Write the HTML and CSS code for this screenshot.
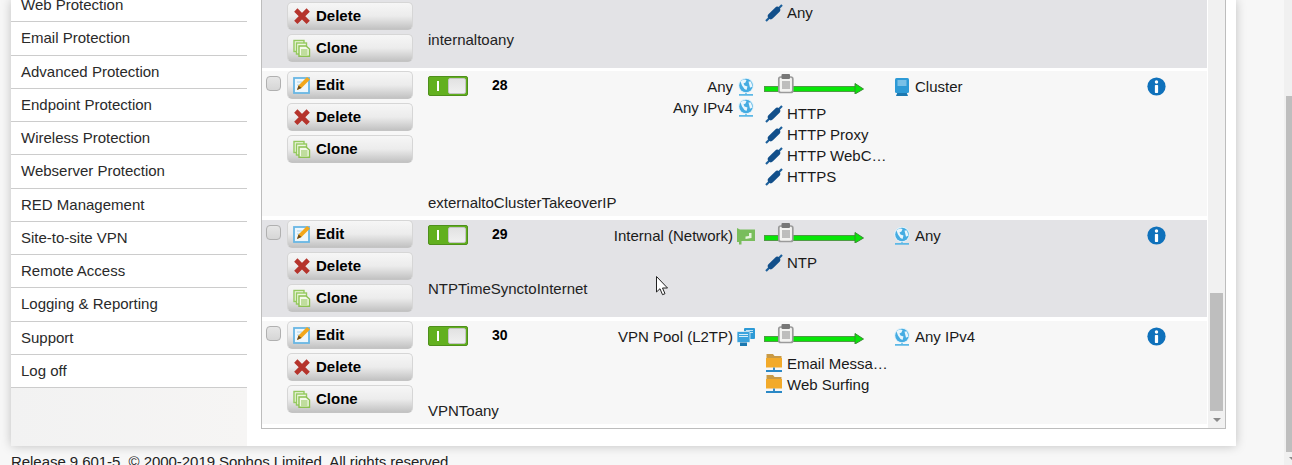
FILE: index.html
```html
<!DOCTYPE html>
<html lang="en">
<head>
<meta charset="utf-8">
<title>Firewall rules</title>
<link rel="stylesheet" href="styles.css">
</head>
<body>
<svg class="defs" width="0" height="0" aria-hidden="true">
  <defs>
    <symbol id="i-edit" viewBox="0 0 18 18"><rect x="1" y="2" width="15" height="15" fill="#eef7fc" stroke="#68b6e4" stroke-width="1.800"/><path d="M4 6h5M4 9h3" stroke="#a9d3ec"/><path d="M4 14l1.500-4.500 8.500-8.500 3 2.500-8.500 8.500z" fill="#f2a71b"/><path d="M4 14l1.500-4.500 3 2.500z" fill="#6b4a1c"/></symbol>
    <symbol id="i-del" viewBox="0 0 18 18"><path d="M2.800 3l12.400 12.400M15.200 3L2.800 15.400" stroke="#b5342c" stroke-width="4.600"/></symbol>
    <symbol id="i-clone" viewBox="0 0 18 18"><rect x="1" y="1.500" width="10" height="11" fill="#eef7e2" stroke="#95c95f" stroke-width="1.400"/><rect x="3.500" y="4" width="10" height="11" fill="#eef7e2" stroke="#95c95f" stroke-width="1.400"/><path d="M6 7h7l3.500 3v7.300H6z" fill="#f4fae9" stroke="#8cc152" stroke-width="1.400"/><path d="M8 11h6.500M8 13h6.500M8 15h6.500" stroke="#8cc152"/></symbol>
    <symbol id="i-plug" viewBox="0 0 18 18"><path d="M1 17L17 1" stroke="#1c5f9b" stroke-width="2.200"/><path d="M5.800 12.200l6.400-6.400" stroke="#124f8a" stroke-width="6" stroke-linecap="round"/></symbol>
    <symbol id="i-globe" viewBox="0 0 18 18"><path d="M9 14v3M2 16.800h14" stroke="#5cb8e6" stroke-width="1.700"/><circle cx="9" cy="7.500" r="7.800" fill="#dff1fa"/><circle cx="9" cy="7.500" r="6.800" fill="#45ace2"/><path d="M3.500 3.500c2-2.200 4.500-2.500 6-1.500l-1 2.500-2 1 1 2 3 1-1 3.500-2-1-2.500-3.500zM11.500 3.500h2.500l1.500 5-2.500 1.200z" fill="#eaf6fc"/></symbol>
    <symbol id="i-host" viewBox="0 0 18 18"><path d="M5 13h8l2 5H3z" fill="#1b78b0"/><rect x="2" y="0" width="14" height="15" rx="1.500" fill="#2d9ad6"/><path d="M4.500 3h9M4.500 5h9M4.500 7h9" stroke="#c6e7f8"/></symbol>
    <symbol id="i-net" viewBox="0 0 18 18"><path d="M0 1l3 1.500h15V14H4.500v3.500H2V15H0z" fill="#79bd5c"/><path d="M8.500 9.500l3.500-.5V6h2.500v5l-6 1z" fill="#e7f3de"/></symbol>
    <symbol id="i-pool" viewBox="0 0 18 18"><rect x="7" y="0" width="11" height="11" rx="1" fill="#2d9ad6"/><path d="M9 2.500h7M9 4.500h7" stroke="#bfe3f6"/><rect x="0" y="3.500" width="13" height="11" rx="1" fill="#3aa3dd" stroke="#f7f7f7" stroke-width=".7"/><path d="M2 6.500h9M2 8.500h9" stroke="#d6eefa"/><path d="M3 14.500h7V18H3z" fill="#1b78b0"/></symbol>
    <symbol id="i-group" viewBox="0 0 18 20"><path d="M1.500 0h6.500l1.500 2h7v11h-15z" fill="#c99a45"/><path d="M1 4h16v9.500H1z" fill="#f2aa2a"/><path d="M9 13.500v3.500" stroke="#2a7fbd" stroke-width="1.800"/><path d="M1 17h16" stroke="#2a88c6" stroke-width="2"/></symbol>
    <symbol id="i-arrow" viewBox="0 0 100 20"><rect x="0.500" y="12.500" width="92" height="5" fill="#07e607" stroke="#4f9a45"/><path d="M91 9.500l8.500 5.500-8.500 5z" fill="#07e607" stroke="#3d8b35"/><rect x="14.800" y="3" width="14" height="15.500" rx="2" fill="#f3f3f1" stroke="#9a9a9a" stroke-width="1.700"/><rect x="17.500" y="0" width="8.500" height="5" rx="1" fill="#777"/><path d="M18 8h8M18 10h8M18 12h8M18 14h8" stroke="#888"/></symbol>
    <symbol id="i-info" viewBox="0 0 20 20"><circle cx="10" cy="10" r="9.600" fill="#0f71bb"/><circle cx="10" cy="5.300" r="1.800" fill="#fff"/><rect x="8.300" y="8.300" width="3.400" height="8.500" rx=".8" fill="#fff"/></symbol>
  </defs>
</svg>

<div class="shell">
  <nav class="side">
    <ul class="menu">
      <li>Web Protection</li>
      <li>Email Protection</li>
      <li>Advanced Protection</li>
      <li>Endpoint Protection</li>
      <li>Wireless Protection</li>
      <li>Webserver Protection</li>
      <li>RED Management</li>
      <li>Site-to-site VPN</li>
      <li>Remote Access</li>
      <li>Logging &amp; Reporting</li>
      <li>Support</li>
      <li>Log off</li>
    </ul>
  </nav>
  <main class="main">
    <div class="box">
      <div class="list">
        <div class="rows">

          <div class="row dark row-27">
            <div class="check-cell"></div>
            <div class="buttons">
              <button class="btn"><svg class="ic"><use href="#i-edit"/></svg>Edit</button>
              <button class="btn"><svg class="ic"><use href="#i-del"/></svg>Delete</button>
              <button class="btn"><svg class="ic"><use href="#i-clone"/></svg>Clone</button>
            </div>
            <div class="body">
              <div class="info-line">
                <div class="toggle-cell"></div>
                <div class="num"></div>
                <div class="src"></div>
                <div class="mid">
                  <div class="arrow-spacer"></div>
                  <div class="svc-list">
                    <div class="svc"><svg class="ic"><use href="#i-plug"/></svg><span>Any</span></div>
                  </div>
                </div>
              </div>
              <div class="name name-27">internaltoany</div>
            </div>
          </div>

          <div class="row light row-28">
            <div class="check-cell"><span class="check"></span></div>
            <div class="buttons">
              <button class="btn"><svg class="ic"><use href="#i-edit"/></svg>Edit</button>
              <button class="btn"><svg class="ic"><use href="#i-del"/></svg>Delete</button>
              <button class="btn"><svg class="ic"><use href="#i-clone"/></svg>Clone</button>
            </div>
            <div class="body">
              <div class="info-line">
                <div class="toggle-cell"><span class="toggle"><span class="bar"></span><span class="knob"></span></span></div>
                <div class="num">28</div>
                <div class="src">
                  <div class="src-item">Any<svg class="ic"><use href="#i-globe"/></svg></div>
                  <div class="src-item">Any IPv4<svg class="ic"><use href="#i-globe"/></svg></div>
                </div>
                <div class="mid">
                  <svg class="arrow"><use href="#i-arrow"/></svg>
                  <div class="svc-list">
                    <div class="svc"><svg class="ic"><use href="#i-plug"/></svg><span>HTTP</span></div>
                    <div class="svc"><svg class="ic"><use href="#i-plug"/></svg><span>HTTP Proxy</span></div>
                    <div class="svc"><svg class="ic"><use href="#i-plug"/></svg><span>HTTP WebC…</span></div>
                    <div class="svc"><svg class="ic"><use href="#i-plug"/></svg><span>HTTPS</span></div>
                  </div>
                </div>
                <div class="dst"><svg class="ic"><use href="#i-host"/></svg>Cluster</div>
                <svg class="info"><use href="#i-info"/></svg>
              </div>
              <div class="name">externaltoClusterTakeoverIP</div>
            </div>
          </div>

          <div class="row dark row-29">
            <div class="check-cell"><span class="check"></span></div>
            <div class="buttons">
              <button class="btn"><svg class="ic"><use href="#i-edit"/></svg>Edit</button>
              <button class="btn"><svg class="ic"><use href="#i-del"/></svg>Delete</button>
              <button class="btn"><svg class="ic"><use href="#i-clone"/></svg>Clone</button>
            </div>
            <div class="body">
              <div class="info-line">
                <div class="toggle-cell"><span class="toggle"><span class="bar"></span><span class="knob"></span></span></div>
                <div class="num">29</div>
                <div class="src">
                  <div class="src-item">Internal (Network)<svg class="ic"><use href="#i-net"/></svg></div>
                </div>
                <div class="mid">
                  <svg class="arrow"><use href="#i-arrow"/></svg>
                  <div class="svc-list">
                    <div class="svc"><svg class="ic"><use href="#i-plug"/></svg><span>NTP</span></div>
                  </div>
                </div>
                <div class="dst"><svg class="ic"><use href="#i-globe"/></svg>Any</div>
                <svg class="info"><use href="#i-info"/></svg>
              </div>
              <div class="name">NTPTimeSynctoInternet</div>
            </div>
          </div>

          <div class="row light row-30">
            <div class="check-cell"><span class="check"></span></div>
            <div class="buttons">
              <button class="btn"><svg class="ic"><use href="#i-edit"/></svg>Edit</button>
              <button class="btn"><svg class="ic"><use href="#i-del"/></svg>Delete</button>
              <button class="btn"><svg class="ic"><use href="#i-clone"/></svg>Clone</button>
            </div>
            <div class="body">
              <div class="info-line">
                <div class="toggle-cell"><span class="toggle"><span class="bar"></span><span class="knob"></span></span></div>
                <div class="num">30</div>
                <div class="src">
                  <div class="src-item">VPN Pool (L2TP)<svg class="ic"><use href="#i-pool"/></svg></div>
                </div>
                <div class="mid">
                  <svg class="arrow"><use href="#i-arrow"/></svg>
                  <div class="svc-list">
                    <div class="svc"><svg class="ic ic-tall"><use href="#i-group"/></svg><span>Email Messa…</span></div>
                    <div class="svc"><svg class="ic ic-tall"><use href="#i-group"/></svg><span>Web Surfing</span></div>
                  </div>
                </div>
                <div class="dst"><svg class="ic"><use href="#i-globe"/></svg>Any IPv4</div>
                <svg class="info"><use href="#i-info"/></svg>
              </div>
              <div class="name">VPNToany</div>
            </div>
          </div>

        </div>
        <div class="scrollbar">
          <div class="track"><div class="thumb"></div></div>
          <div class="down"></div>
        </div>
      </div>
    </div>
  </main>
</div>
<footer class="foot">Release 9.601-5&nbsp; © 2000-2019 Sophos Limited. All rights reserved.</footer>
<div class="page-scroll"><div class="page-thumb"></div><div class="page-down"></div></div>
<svg class="cursor" viewBox="0 0 12 20" aria-hidden="true"><path d="M.5.500v15.500l3.500-3.300 2.500 6 2.500-1-2.500-5.700h5z" fill="#fff" stroke="#222"/></svg>
</body>
</html>
```
FILE: styles.css
```css
* { box-sizing: border-box; }
html, body { height: 465px; }
body {
  margin: 0;
  overflow: hidden;
  background: #f7f7f7;
  color: #1a1a1a;
  font: 15px/21px "Liberation Sans", Arial, sans-serif;
  display: flex;
  flex-direction: column;
  position: relative;
}
.defs { position: absolute; }
.cursor {
  position: absolute;
  left: 656px;
  top: 276px;
  width: 12px;
  height: 20px;
}
.shell {
  flex: none;
  height: 446px;
  width: 1225px;
  margin-left: 11px;
  display: flex;
  background: #fff;
  box-shadow: 0 0 10px rgba(0,0,0,.22);
  overflow: hidden;
}
.side {
  flex: none;
  width: 236px;
  background: linear-gradient(90deg, #f2f2f2, #f6f5f4);
}
.menu {
  list-style: none;
  margin: -11px 0 0;
  padding: 0;
}
.menu li {
  height: 33.27px;
  line-height: 31px;
  padding-left: 10px;
  background: #fff;
  border-bottom: 1px solid #ccc;
  color: #2a2a2a;
}
.main {
  flex: 1;
  padding: 0 10px 0 14px;
}
.box {
  height: 429px;
  border: 1px solid #bdbdbd;
  border-top: 0;
  overflow: hidden;
}
.list {
  display: flex;
  height: 100%;
}
.rows {
  flex: 1;
  min-width: 0;
  margin: -30px 1px 0 0;
  display: flex;
  flex-direction: column;
  gap: 4px;
}
.row {
  display: flex;
  flex: none;
}
.row.dark { background: #e3e3e6; }
.row.light { background: #f7f7f7; }
.row-27 { height: 98px; margin-bottom: -1px; }
.row-28 { height: 145px; }
.row-29 { height: 97px; }
.row-30 { height: 103px; }
.check-cell {
  flex: none;
  width: 25px;
  padding: 5px 0 0 4px;
}
.check {
  display: block;
  width: 15px;
  height: 15px;
  border: 1px solid #b0b0b0;
  border-radius: 4px;
  background: linear-gradient(#e6e6e6, #d6d6d6);
}
.buttons {
  flex: none;
  width: 126px;
  display: flex;
  flex-direction: column;
  gap: 4px;
}
.btn {
  display: flex;
  align-items: center;
  gap: 5px;
  width: 126px;
  height: 28px;
  padding: 0 0 2px 5px;
  border: 1px solid #d6d6d6;
  border-bottom-color: #c4c4c4;
  border-radius: 5px;
  background: linear-gradient(#f6f6f6 0%, #ececec 50%, #c2c2c2 100%);
  font: bold 15px "Liberation Sans", Arial, sans-serif;
  color: #000;
}
.btn .ic { margin-top: 2px; }
.ic {
  flex: none;
  width: 18px;
  height: 18px;
}
.ic-tall { height: 20px; }
.body {
  flex: 1;
  min-width: 0;
  padding-left: 15px;
}
.info-line {
  display: flex;
  align-items: flex-start;
}
.toggle-cell {
  flex: none;
  width: 64px;
  padding-top: 5px;
}
.toggle {
  display: flex;
  align-items: center;
  width: 40px;
  height: 20px;
  padding: 1px;
  border-radius: 2px;
  background: #62b01f;
  border: 1px solid #4f8f1c;
}
.bar {
  flex: none;
  width: 2px;
  height: 10px;
  margin: 0 9px 0 7px;
  background: #fff;
}
.knob {
  flex: none;
  width: 18px;
  height: 16px;
  border-radius: 2px;
  background: linear-gradient(#e2e2e2, #f0f0f0);
  border: 1px solid #c4c4c4;
}
.num {
  flex: none;
  width: 30px;
  padding-top: 4px;
  font-weight: bold;
  color: #000;
  font-size: 14px;
}
.src {
  flex: none;
  width: 233px;
  padding-top: 5px;
}
.src-item {
  display: flex;
  justify-content: flex-end;
  align-items: center;
  gap: 4px;
  height: 21px;
}
.mid {
  flex: none;
  width: 138px;
  padding-left: 9px;
}
.arrow {
  display: block;
  width: 100px;
  height: 20px;
  margin-top: 3px;
}
.arrow-spacer { height: 23px; }
.svc-list { margin: 9px 0 0 1px; }
.svc {
  display: flex;
  align-items: center;
  gap: 4px;
  height: 21px;
}
.dst {
  flex: none;
  width: 254px;
  display: flex;
  align-items: center;
  gap: 4px;
  height: 21px;
  margin-top: 5px;
}
.info {
  flex: none;
  width: 19px;
  height: 19px;
  margin-top: 6px;
}
.name {
  margin-top: 5px;
  color: #222;
}
.name-27 { margin-top: 6px; }
.scrollbar {
  flex: none;
  width: 17px;
  background: #f1f1f1;
  display: flex;
  flex-direction: column;
}
.track {
  flex: 1;
  display: flex;
  flex-direction: column;
  justify-content: flex-end;
  padding: 0 2px;
}
.thumb {
  height: 118px;
  background: #bebebe;
}
.down {
  flex: none;
  height: 17px;
  display: flex;
  align-items: center;
  justify-content: center;
}
.down::after {
  content: "";
  border: 4px solid transparent;
  border-top: 4px solid #8a8a8a;
  border-bottom: 0;
}
.foot {
  flex: none;
  padding: 5px 0 0 11px;
  white-space: nowrap;
  letter-spacing: -.05px;
  color: #222;
}
.page-scroll {
  position: absolute;
  top: 0;
  bottom: 0;
  right: 0;
  width: 8px;
  background: #f0f0f0;
  display: flex;
  flex-direction: column;
  justify-content: flex-end;
}
.page-thumb {
  flex: none;
  height: 356px;
  margin: 0 0 5px 2px;
  background: #bebebe;
}
.page-down {
  flex: none;
  width: 0;
  height: 4px;
  margin: 0 0 4px 5px;
  border-left: 4px solid transparent;
  border-right: 4px solid transparent;
  border-top: 4px solid #8a8a8a;
}
```
